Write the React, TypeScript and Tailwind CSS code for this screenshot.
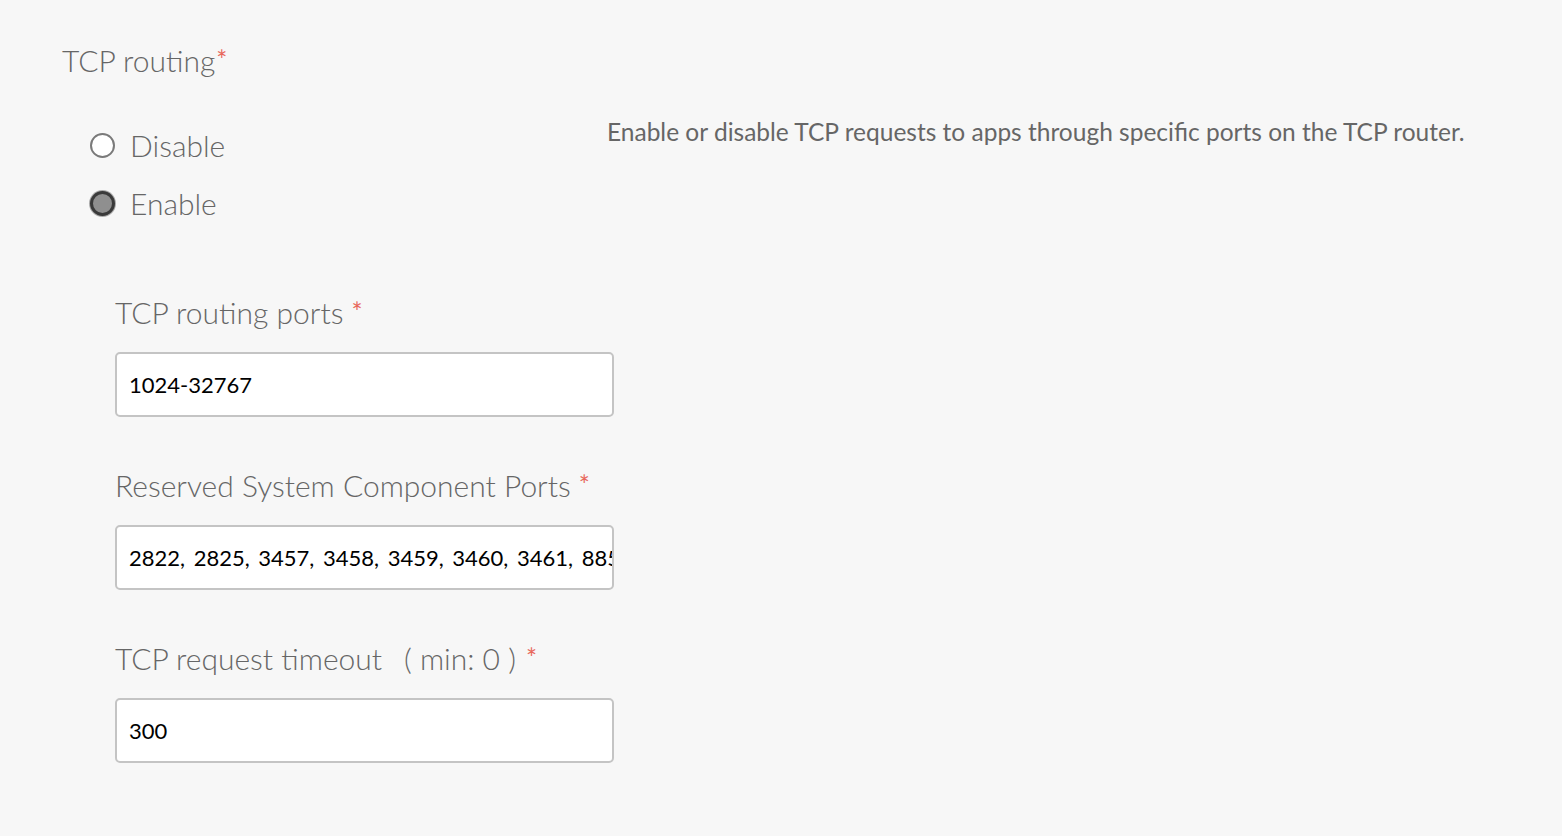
import React from "react";

const font = { fontFamily: '"Source Sans Pro", Lato, "Noto Sans", sans-serif' };

function Star({ ml }: { ml: string }) {
  return <span className={`text-[#e8685c] text-[26px] font-normal relative -top-[2px] ${ml}`}>*</span>;
}

function Field({ label, extra, value, spaced }: { label: string; extra?: boolean; value: string; spaced?: boolean }) {
  return (
    <div className="flex flex-col">
      <div className="text-[30px] leading-[36px] font-light text-[#666] flex items-baseline">
        <span>{label}</span>
        {extra && <span className="ml-[22px]">( min: 0 )</span>}
        {extra ? <Star ml="ml-[10px]" /> : <Star ml="ml-[8px]" />}
      </div>
      <div className="mt-[20px] w-[499px] h-[65px] bg-white border-2 border-[#c4c4c4] rounded-[5px] flex items-center pl-[12px] overflow-hidden">
        <span className={`text-[22px] text-black whitespace-nowrap ${spaced ? "[word-spacing:3px]" : ""}`}>{value}</span>
      </div>
    </div>
  );
}

export default function App() {
  return (
    <div className="w-[1562px] h-[836px] bg-[#f7f7f7] overflow-hidden" style={font}>
      <div className="pl-[62px] pt-[42px]">
        <div className="text-[30px] leading-[36px] font-light text-[#666] flex items-baseline">
          <span>TCP routing</span>
          <Star ml="ml-[1px]" />
        </div>
        <div className="flex mt-[47px]">
          <div className="w-[545px] pl-[28px] flex flex-col gap-[22px]">
            <label className="flex items-center gap-[15px]">
              <span className="w-[25px] h-[25px] rounded-full border-2 border-[#7a7a7a] bg-white" />
              <span className="text-[30px] leading-[36px] font-light text-[#666]">Disable</span>
            </label>
            <label className="flex items-center gap-[15px]">
              <span className="w-[25px] h-[25px] rounded-full border-[3px] border-[#3a3a3a] bg-[#8f8f8f] shadow-[0_0_0_1px_#aaa]" />
              <span className="text-[30px] leading-[36px] font-light text-[#666]">Enable</span>
            </label>
          </div>
          <div className="text-[24.5px] leading-[28px] text-[#666] -mt-[9px] whitespace-nowrap">
            Enable or disable TCP requests to apps through specific ports on the TCP router.
          </div>
        </div>
        <div className="ml-[53px] mt-[73px] flex flex-col gap-[50px]">
          <Field label="TCP routing ports" value="1024-32767" />
          <Field label="Reserved System Component Ports" value="2822, 2825, 3457, 3458, 3459, 3460, 3461, 8853, 9100, 14726" spaced />
          <Field label="TCP request timeout" extra value="300" />
        </div>
      </div>
    </div>
  );
}
